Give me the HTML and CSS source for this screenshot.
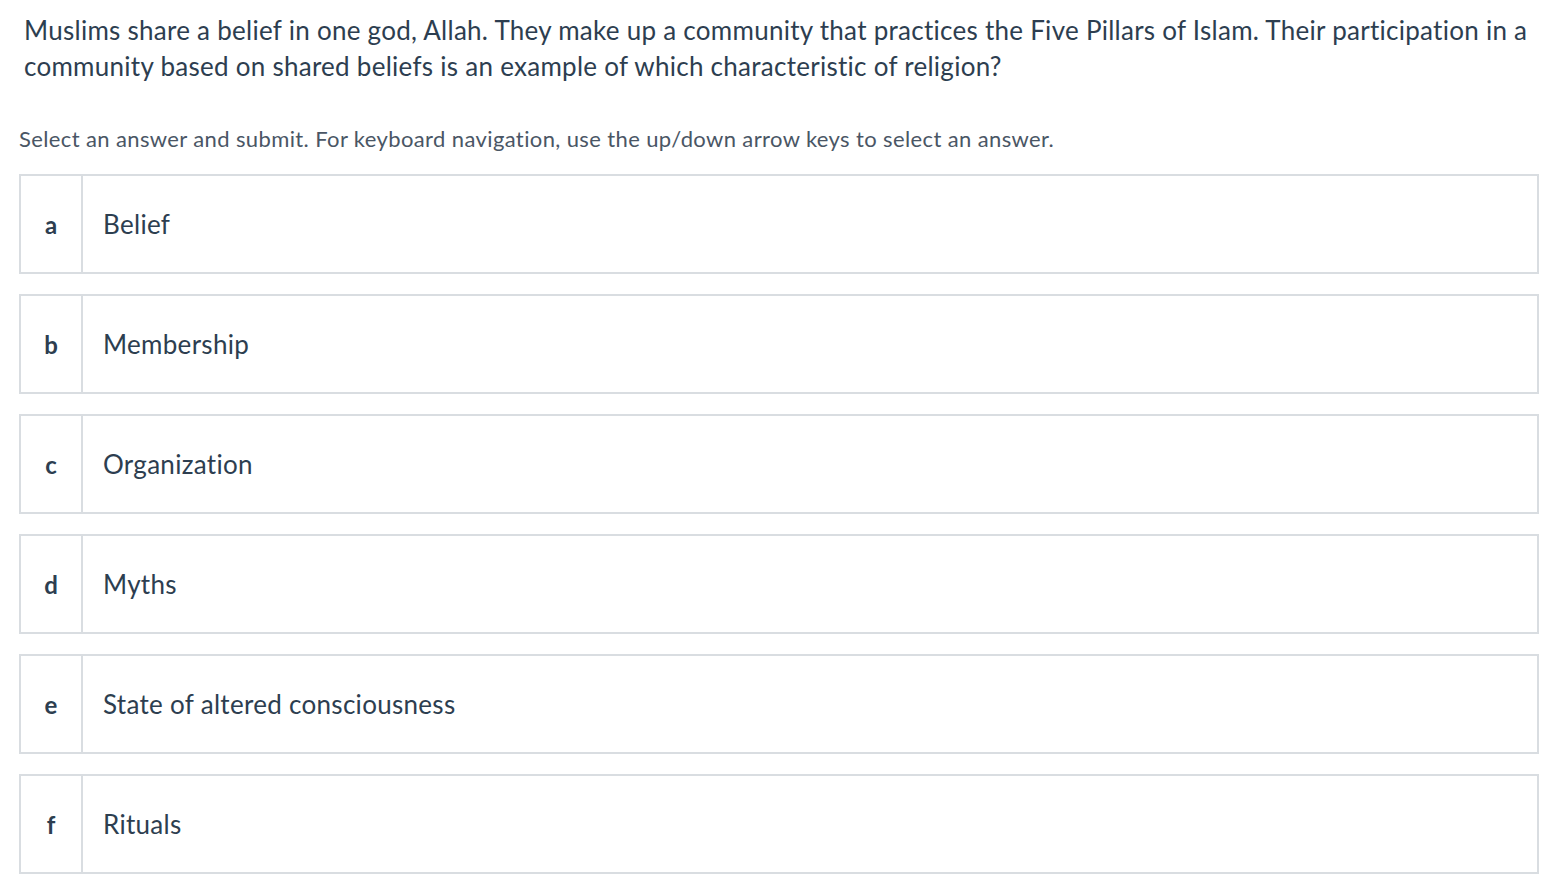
FILE: index.html
```html
<!DOCTYPE html>
<html>
<head>
<meta charset="utf-8">
<link rel="stylesheet" href="styles.css">
</head>
<body>
<div class="page">
  <p class="question">Muslims share a belief in one god, Allah. They make up a community that practices the Five Pillars of Islam. Their participation in a community based on shared beliefs is an example of which characteristic of religion?</p>
  <p class="instructions">Select an answer and submit. For keyboard navigation, use the up/down arrow keys to select an answer.</p>
  <div class="options">
    <div class="option"><div class="letter">a</div><div class="label">Belief</div></div>
    <div class="option"><div class="letter">b</div><div class="label">Membership</div></div>
    <div class="option"><div class="letter">c</div><div class="label">Organization</div></div>
    <div class="option"><div class="letter">d</div><div class="label">Myths</div></div>
    <div class="option"><div class="letter">e</div><div class="label">State of altered consciousness</div></div>
    <div class="option"><div class="letter">f</div><div class="label">Rituals</div></div>
  </div>
</div>
</body>
</html>
```
FILE: styles.css
```css
html, body {
  margin: 0;
  padding: 0;
  background: #ffffff;
}
body {
  font-family: "Lato", "Liberation Sans", sans-serif;
  color: #2d3e50;
}
.page {
  padding: 12px 17px 0 19px;
}
.question {
  margin: 0 0 0 5px;
  font-size: 26px;
  line-height: 36px;
  letter-spacing: 0.27px;
  color: #2d3e50;
}
.instructions {
  margin: 40px 0 0 0;
  font-size: 22px;
  line-height: 30px;
  letter-spacing: 0.38px;
  color: #4a5665;
}
.options {
  margin-top: 20px;
  display: flex;
  flex-direction: column;
  gap: 20px;
}
.option {
  height: 100px;
  box-sizing: border-box;
  border: 2px solid #d9dde1;
  display: flex;
  align-items: stretch;
}
.letter {
  width: 60px;
  border-right: 2px solid #d9dde1;
  display: flex;
  align-items: center;
  justify-content: center;
  font-size: 24px;
  font-weight: 700;
  color: #2d3e50;
}
.label {
  display: flex;
  align-items: center;
  padding-left: 20px;
  font-size: 26px;
  letter-spacing: 0.3px;
  color: #2d3e50;
}
```
